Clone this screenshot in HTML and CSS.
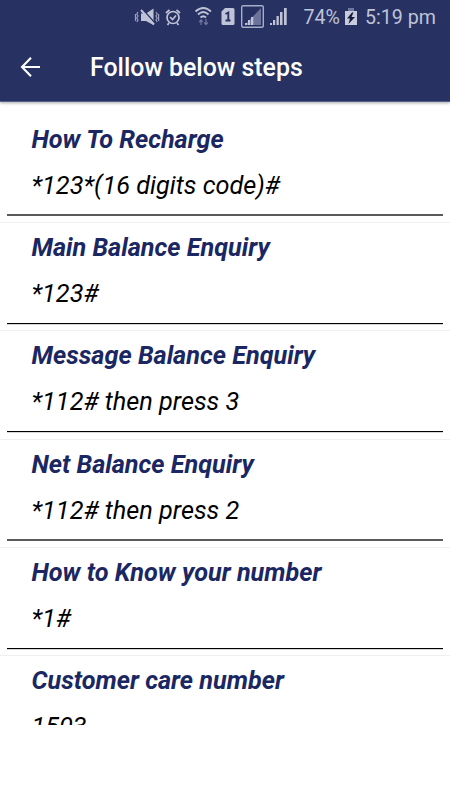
FILE: index.html
```html
<!DOCTYPE html>
<html lang="en">
<head>
<meta charset="utf-8">
<meta name="viewport" content="width=device-width, initial-scale=1">
<title>Follow below steps</title>
<link rel="stylesheet" href="styles.css">
</head>
<body>
<header class="top">
  <div class="status">
    <svg class="status-icons" width="160" height="36" viewBox="130 0 160 36" fill="#bfc3d8" aria-hidden="true">
      <path d="M141 13.500h5l7.500-5v16.500L146 21h-5z"/>
      <path d="M142.800 9.500l12 13.500" stroke="#283262" stroke-width="1.500"/>
      <path d="M141 10l13 14.500" stroke="#bfc3d8" stroke-width="2"/>
      <path d="M138 12l-1.200 2 1.200 2-1.200 2 1.200 2-1.200 2M135.500 14v7M156 12l1.200 2-1.200 2 1.200 2-1.200 2 1.200 2M158.600 14v7" fill="none" stroke="#9a9fbd" stroke-width="1.200"/>
      <g fill="none" stroke="#bfc3d8" stroke-width="1.700">
        <circle cx="173" cy="17.500" r="6"/>
        <path d="M166 13l3.500-3.200M180 13l-3.500-3.200M169 23l-1.500 2M177 23l1.500 2M170 17l2.500 2.500 3.500-4"/>
        <path d="M195.500 11.500q8-7 15.500 0M198 14.500q5.300-5 10.500 0M200.500 17.500q2.800-2.600 5.500 0" stroke-width="1.800"/>
      </g>
      <path d="M201 25v-5M199.300 22l1.700-2 1.700 2M206 19v5M204.300 22.500l1.700 2 1.700-2" fill="none" stroke="#7077a0" stroke-width="1.200"/>
      <path d="M221.500 11.500L225 8h8a1.500 1.500 0 0 1 1.500 1.500v14a1.500 1.500 0 0 1-1.500 1.500h-10a1.500 1.500 0 0 1-1.500-1.500z"/>
      <path d="M225.500 14l2.800-1.500V21M225.500 20.500h5" fill="none" stroke="#283262" stroke-width="1.900"/>
      <rect x="241.700" y="5.700" width="21.600" height="21.600" rx="1.500" fill="none" stroke="#a8adc8" stroke-width="1.400"/>
      <path d="M245 25L261 8v17z" fill="#6d749c"/>
      <path d="M245 25v-2h2v2zM248 25v-5h2v5zM251 25v-8h2.300v8z"/>
      <path d="M270 25v-2h2v2zM273 25v-5h2.200v5zM276.500 25v-9h2.300v9zM280 25v-13h2.500v13zM284 25V8h2.700v17z"/>
    </svg>
    <span class="percent">74%</span>
    <svg class="battery" width="14" height="20" viewBox="0 0 14 20" aria-hidden="true">
      <path d="M4 0h6v3H4z" fill="#7077a0"/><path d="M1 3h12v14H1z" fill="#c8cbdc"/>
      <path d="M8 4.500L3 10.500h3L4.500 16 11 9H7.500l2-4.500z" fill="#151a3d"/>
    </svg>
    <span class="time">5:19 pm</span>
  </div>
  <div class="bar">
    <svg class="back" width="22" height="22" viewBox="0 0 22 22" aria-label="Back"><path d="M20 11H2M11 1.800L2 11l9 9.200" fill="none" stroke="#fff" stroke-width="2.100"/></svg>
    <h1>Follow below steps</h1>
  </div>
</header>
<main class="list">
  <section class="item soft"><h2>How To Recharge</h2><p>*123*(16 digits code)#</p></section>
  <section class="item"><h2>Main Balance Enquiry</h2><p>*123#</p></section>
  <section class="item"><h2>Message Balance Enquiry</h2><p>*112# then press 3</p></section>
  <section class="item soft"><h2>Net Balance Enquiry</h2><p>*112# then press 2</p></section>
  <section class="item"><h2>How to Know your number</h2><p>*1#</p></section>
  <section class="item"><h2>Customer care number</h2><p>1503</p></section>
</main>
</body>
</html>
```
FILE: styles.css
```css
* { box-sizing: border-box; }
body { margin: 0; height: 800px; overflow: hidden; background: #fff; font-family: Roboto, sans-serif; }
h1, h2, p { margin: 0; white-space: nowrap; }
.top { position: relative; height: 102px; background: #283262; border-bottom: 1px solid #55608c; box-shadow: 0 1px 3px rgba(0,0,0,.35); }
.status { display: flex; height: 36px; padding-left: 130px; color: #bfc3d8; font-size: 19.6px; line-height: 36px; }
.status-icons { flex: none; }
.percent { width: 40px; margin-left: 13.500px; }
.battery { margin: 8px 0 0; flex: none; }
.time { margin-left: 7.500px; white-space: nowrap; }
.bar { display: flex; align-items: center; height: 62px; padding-left: 20px; }
.back { flex: none; margin-right: 48px; }
h1 { padding-top: 2px; color: #fff; font-size: 24.9px; font-weight: 500; line-height: 32px; }
.list { height: 623px; overflow: hidden; padding-top: 13px; }
.item { display: flex; flex-direction: column; height: 108.2px; padding: 8px 7px 0; border-bottom: 1px solid #f0f0f0; }
h2 { padding: 1px 0 0 24.500px; color: #1a2762; font-size: 25.25px; font-weight: 700; font-style: italic; line-height: 32px; }
p { height: 60px; padding: 14px 0 0 24.500px; color: #000; font-size: 25.3px; font-style: italic; line-height: 32px; border-bottom: 1px solid #000; box-shadow: 0 1px 0 #d8d8d8; }
.soft p { border-bottom: 2px solid #5a5a5a; box-shadow: none; }
```
